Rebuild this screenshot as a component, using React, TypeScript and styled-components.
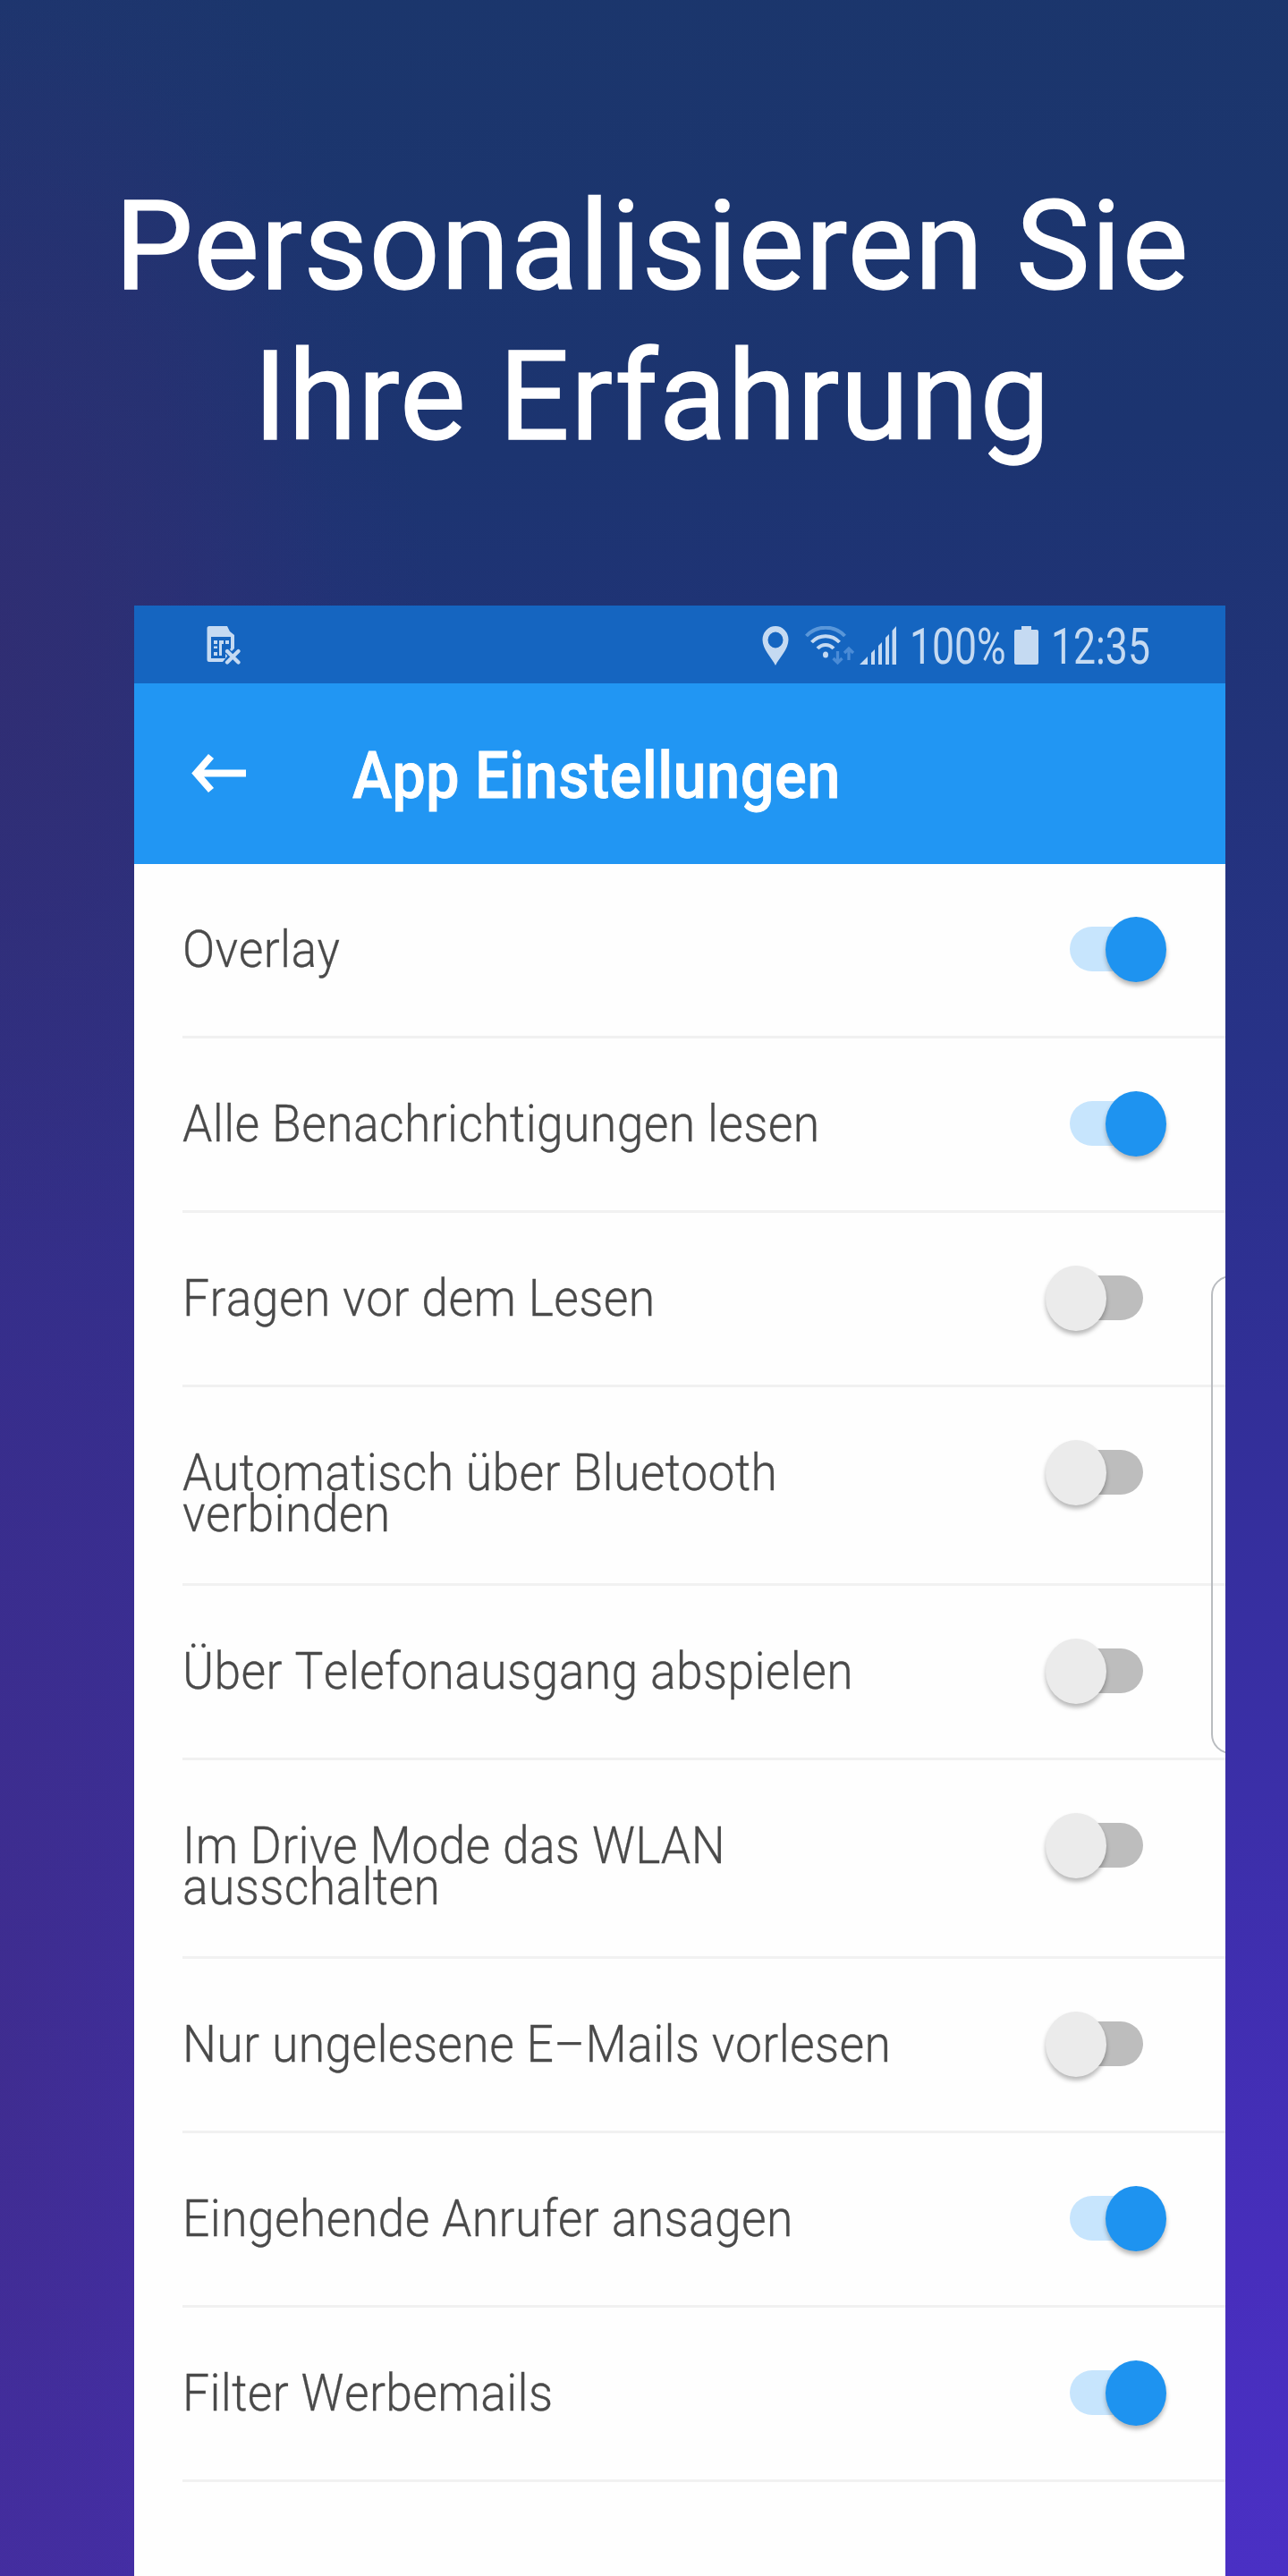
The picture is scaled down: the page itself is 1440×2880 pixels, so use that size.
import React from 'react';
import styled, { createGlobalStyle } from 'styled-components';

const settings = [
    { label: 'Overlay', on: true },
    { label: 'Alle Benachrichtigungen lesen', on: true },
    { label: 'Fragen vor dem Lesen', on: false },
    { label: 'Automatisch über Bluetooth verbinden', on: false, tall: true },
    { label: 'Über Telefonausgang abspielen', on: false },
    { label: 'Im Drive Mode das WLAN ausschalten', on: false, tall: true },
    { label: 'Nur ungelesene E–Mails vorlesen', on: false },
    { label: 'Eingehende Anrufer ansagen', on: true },
    { label: 'Filter Werbemails', on: true },
];

const SimIcon = () => (
    <svg width="38" height="43" viewBox="0 0 38 43" fill="none">
        <path d="M3 0h20l3 6 5 4v15l-5 5-8 10H3a2.500 2.500 0 0 1-2.500-2.500V2.500A2.500 2.500 0 0 1 3 0z" fill="#c5daf2" />
        <path d="M5 12h22v13l-6 4v7H5z" fill="#1565c0" />
        <path d="M8 16h4v4H8zM8 22.500h4v2.500H8zM8 29h4v4H8zM14 16h5v4h-2v13h-3zM21 16h4v4h-4z" fill="#c5daf2" />
        <path d="M23 28l12.500 12.500M35.500 28L23 40.500" stroke="#1565c0" strokeWidth="7" />
        <path d="M23 28l12.500 12.500M35.500 28L23 40.500" stroke="#c5daf2" strokeWidth="4.200" strokeLinecap="round" />
    </svg>
);

const PinIcon = () => (
    <svg width="30" height="44" viewBox="0 0 30 44">
        <path fillRule="evenodd" d="M15 0a14.500 15 0 0 1 14.500 15c0 11-10 20-14.500 29C10.500 35 .5 26 .5 15A14.500 15 0 0 1 15 0zm0 6.500a8.500 9 0 1 0 0 18 8.500 9 0 0 0 0-18z" fill="#c5daf2" />
    </svg>
);

const WifiIcon = () => (
    <svg width="56" height="44" viewBox="0 0 56 44" fill="none">
        <path d="M1.500 11C13-1.500 33-1.500 44.500 11" stroke="#5a97d9" strokeWidth="4" />
        <path d="M7.500 18C16 9 30 9 38.500 18" stroke="#c5daf2" strokeWidth="4" />
        <path d="M14 25c5-5.500 13-5.500 18 0" stroke="#c5daf2" strokeWidth="4" />
        <ellipse cx="23" cy="32" rx="3" ry="3.500" fill="#c5daf2" />
        <path d="M36.500 28v12M31.500 36l5 5 5-5M49 38V26M44 30l5-5 5 5" stroke="#4a8bd6" strokeWidth="3.300" />
    </svg>
);

const SignalIcon = () => (
    <svg width="42" height="44" viewBox="0 0 42 44">
        <path d="M0 43L9 34v9zM13 30l4-4v17h-4zM21 22l4-4v25h-4zM29 13l4-4v34h-4zM36.500 5l4.500-5v43h-4.500z" fill="#c5daf2" />
    </svg>
);

const BatteryIcon = () => (
    <svg width="27" height="44" viewBox="0 0 27 44">
        <path d="M8 0h11v4h6a2 2 0 0 1 2 2v35a2 2 0 0 1-2 2H2a2 2 0 0 1-2-2V6a2 2 0 0 1 2-2h6z" fill="#c5daf2" />
    </svg>
);

const BackIcon = () => (
    <svg width="61" height="46" viewBox="0 0 61 46" fill="none">
        <path d="M61 22.500H6M22 3.500L5.500 22.500l16.500 19" stroke="white" strokeWidth="8" />
    </svg>
);

const App = () => {
    return (
        <PageWrapper>
            <GlobalStyle />
            <Heading>
                <HeadingLine>Personalisieren Sie</HeadingLine>
                <HeadingLine>Ihre Erfahrung</HeadingLine>
            </Heading>
            <Phone>
                <StatusBar>
                    <SimIcon />
                    <StatusGroup>
                        <PinIcon />
                        <WifiIcon />
                        <SignalIcon />
                        <StatusText $width={117}>100%</StatusText>
                        <BatteryIcon />
                        <StatusText $width={124}>12:35</StatusText>
                    </StatusGroup>
                </StatusBar>
                <AppBar>
                    <BackIcon />
                    <Title>App Einstellungen</Title>
                </AppBar>
                <SettingsList>
                    {settings.map(({ label, on, tall }) => (
                        <SettingRow key={label} $tall={tall}>
                            <Label>{label}</Label>
                            <Toggle role="switch" aria-checked={on}>
                                <Track $on={on} />
                                <Thumb $on={on} />
                            </Toggle>
                        </SettingRow>
                    ))}
                </SettingsList>
                <EdgeHandle />
            </Phone>
        </PageWrapper>
    )
}

export default App

const GlobalStyle = createGlobalStyle`
    * {
        box-sizing: border-box;
    }
    body {
        margin: 0;
        font-family: Roboto, sans-serif;
    }
    svg {
        display: block;
        flex-shrink: 0;
    }
`;

const PageWrapper = styled.div`
    display: flex;
    flex-direction: column;
    width: 1440px;
    height: 2880px;
    overflow: hidden;
    background:
        radial-gradient(ellipse 420px 800px at 0 720px, rgba(52, 44, 112, 0.65), rgba(52, 44, 112, 0) 90%),
        radial-gradient(ellipse 700px 2900px at 0 2300px, rgba(62, 44, 130, 0.7), rgba(62, 44, 130, 0) 90%),
        linear-gradient(178deg, #1b366c 0%, #1c3470 18%, #22337a 30%, #283288 42%, #322f98 55%, #3b2fa8 70%, #472ebc 88%, #4a30c4 100%);
`;

const Heading = styled.h1`
    display: flex;
    flex-direction: column;
    align-items: center;
    height: 677px;
    margin: 0;
    padding: 192px 0 0 18px;
    color: white;
    font-size: 139px;
    font-weight: 400;
    line-height: 168px;
    letter-spacing: 1.2px;
    -webkit-text-stroke: 1.5px white;
`;

const HeadingLine = styled.span`
    white-space: nowrap;
`;

const Phone = styled.main`
    position: relative;
    flex: 1;
    width: 1220px;
    margin-left: 150px;
    overflow: hidden;
    background: #fefefe;
`;

const StatusBar = styled.div`
    display: flex;
    justify-content: space-between;
    height: 87px;
    padding: 23px 71px 0 81px;
    background: #1565c0;
`;

const StatusGroup = styled.div`
    display: flex;
    & > svg:nth-child(2) {
        margin-left: 18px;
    }
    & > svg:nth-child(3) {
        margin: 0 14px 0 5px;
    }
    & > svg:nth-child(5) {
        margin-right: 14px;
    }
`;

const StatusText = styled.span<{ $width: number }>`
    width: ${({ $width }) => $width}px;
    color: #c5daf2;
    font-size: 55px;
    line-height: 46px;
    white-space: nowrap;
    transform: scaleX(0.81);
    transform-origin: left;
`;

const AppBar = styled.header`
    display: flex;
    align-items: center;
    height: 202px;
    padding-left: 64px;
    background: #2196f3;
`;

const Title = styled.h2`
    margin: 4px 0 0 119px;
    color: white;
    font-size: 73px;
    font-weight: 500;
    letter-spacing: 0.4px;
    white-space: nowrap;
    transform: scaleX(0.916);
    transform-origin: left;
    -webkit-text-stroke: 0.8px white;
`;

const SettingsList = styled.div`
    padding-left: 54px;
`;

const SettingRow = styled.div<{ $tall?: boolean }>`
    display: flex;
    justify-content: space-between;
    height: ${({ $tall }) => ($tall ? 222 : 195)}px;
    padding: 59px 66px 0 0;
    border-bottom: 3px solid #f1f1f1;
`;

const Label = styled.span`
    width: 900px;
    padding-top: 13px;
    color: #4a4a4a;
    font-size: 58px;
    font-weight: 300;
    font-kerning: none;
    line-height: 46px;
    letter-spacing: 0.4px;
    transform: scaleX(0.922);
    transform-origin: left;
    -webkit-text-stroke: 0.3px #4a4a4a;
`;

const Toggle = styled.div`
    position: relative;
    flex-shrink: 0;
    width: 135px;
    height: 73px;
`;

const Track = styled.div<{ $on: boolean }>`
    width: 82px;
    height: 50px;
    margin: 11px 0 0 27px;
    border-radius: 25px;
    background: ${({ $on }) => ($on ? '#c7e5fd' : '#bdbdbd')};
`;

const Thumb = styled.div<{ $on: boolean }>`
    position: absolute;
    top: 0;
    ${({ $on }) => ($on ? 'right' : 'left')}: 0;
    width: 68px;
    height: 73px;
    border-radius: 50%;
    background: ${({ $on }) => ($on ? '#1e93f0' : '#ebebeb')};
    box-shadow: 0 4px 5px rgba(0, 0, 0, 0.28);
`;

const EdgeHandle = styled.div`
    position: absolute;
    top: 749px;
    left: 1204px;
    width: 48px;
    height: 535px;
    border: 2px solid #b9bcc0;
    border-radius: 22px;
`;
